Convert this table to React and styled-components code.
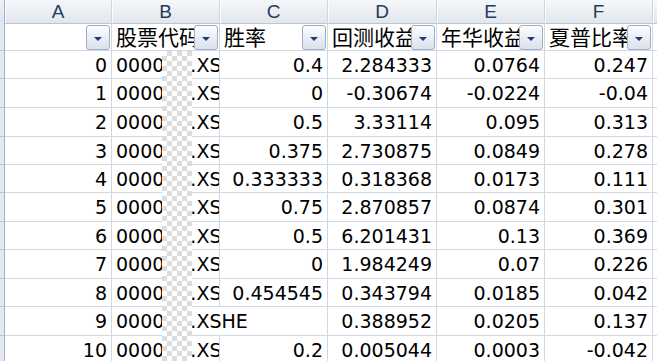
import React from 'react';
import styled, { createGlobalStyle } from 'styled-components';

const Global = createGlobalStyle`
  html, body { margin: 0; padding: 0; background: #fff; overflow: hidden; }
  #root { width: 657px; height: 361px; overflow: hidden; }
`;

const COLS = '5px 107px 108px 108px 109px 108px 108px 40px';

const Sheet = styled.div`
  position: relative;
  width: 657px;
  height: 361px;
  overflow: hidden;
  background: #fff;
  display: flex;
  flex-direction: column;
`;

const Row = styled.div`
  display: grid;
  grid-template-columns: ${COLS};
  height: ${(p) => p.$h}px;
  flex: none;
`;

const Corner = styled.div`
  box-sizing: border-box;
  background: linear-gradient(#eef2f7, #dbe3ee);
  border-right: 1px solid #9fb2cb;
  border-bottom: 1px solid #b9c6d8;
`;

const RowHead = styled.div`
  box-sizing: border-box;
  background: #e2e9f2;
  border-right: 1px solid #9fb2cb;
  border-bottom: 1px solid #b7c4d6;
`;

const ColHead = styled.div`
  box-sizing: border-box;
  background: linear-gradient(#f5f7fa, #e1e6ed);
  border-right: 1px solid #d0d6df;
  border-bottom: 1px solid #bcc7d5;
  box-shadow: inset 1px 0 0 #fbfcfd;
  display: flex;
  align-items: center;
  justify-content: center;
  font-family: "Liberation Sans", Arial, sans-serif;
  font-size: 19px;
  color: #253b5c;
  padding-top: 1px;
`;

const FilterCell = styled.div`
  box-sizing: border-box;
  border-right: 1px solid #d0d7e5;
  border-bottom: 1px solid #d0d7e5;
  display: flex;
  align-items: center;
  padding: 0 1px 0 4px;
  min-width: 0;
`;

const FilterLabel = styled.span`
  flex: 1;
  min-width: 0;
  overflow: hidden;
  white-space: nowrap;
  font-family: "Noto Sans CJK SC", "Noto Sans", sans-serif;
  font-size: 21px;
  line-height: 28px;
  color: #000;
`;

const DropButton = styled.div`
  flex: none;
  align-self: flex-end;
  box-sizing: border-box;
  width: 24px;
  height: 25px;
  border: 1px solid #9eaec4;
  border-radius: 3px;
  background: linear-gradient(#fdfdfe, #e9edf3 55%, #dbe2eb);
  display: flex;
  align-items: center;
  justify-content: center;
  padding-top: 2px;
`;

const Arrow = styled.span`
  width: 0;
  height: 0;
  border-left: 4px solid transparent;
  border-right: 4px solid transparent;
  border-top: 4px solid #1f3b73;
`;

const Cell = styled.div`
  box-sizing: border-box;
  border-right: ${(p) => (p.$open ? '1px solid transparent' : '1px solid #d0d7e5')};
  border-bottom: 1px solid #d0d7e5;
  display: flex;
  align-items: center;
  justify-content: ${(p) => (p.$left ? 'flex-start' : 'flex-end')};
  padding: ${(p) => (p.$left ? '0 0 0 4px' : '0 4px 0 0')};
  overflow: ${(p) => (p.$open ? 'visible' : 'hidden')};
  white-space: nowrap;
  font-family: "DejaVu Sans", Verdana, sans-serif;
  font-size: 19px;
  color: #000;
  position: relative;
  z-index: ${(p) => (p.$open ? 1 : 0)};
`;

const CodeTail = styled.span`
  margin-left: 26px;
`;

const Redaction = styled.div`
  position: absolute;
  left: 162px;
  top: 51px;
  width: 30px;
  bottom: 0;
  z-index: 2;
  background: repeating-conic-gradient(#dcdcdc 0% 25%, #ffffff 0% 50%) 0 0 / 10px 10px;
`;

const LETTERS = ['A', 'B', 'C', 'D', 'E', 'F', ''];
const HEADS = ['', '股票代码', '胜率', '回测收益', '年华收益', '夏普比率'];

const DATA = [
  ['0.4', '2.284333', '0.0764', '0.247'],
  ['0', '-0.30674', '-0.0224', '-0.04'],
  ['0.5', '3.33114', '0.095', '0.313'],
  ['0.375', '2.730875', '0.0849', '0.278'],
  ['0.333333', '0.318368', '0.0173', '0.111'],
  ['0.75', '2.870857', '0.0874', '0.301'],
  ['0.5', '6.201431', '0.13', '0.369'],
  ['0', '1.984249', '0.07', '0.226'],
  ['0.454545', '0.343794', '0.0185', '0.042'],
  ['', '0.388952', '0.0205', '0.137'],
  ['0.2', '0.005044', '0.0003', '-0.042'],
];

const HEIGHTS = [28, 29, 29, 28, 28, 29, 28, 29, 28, 29, 28];

export default function App() {
  return (
    <>
      <Global />
      <Sheet>
        <Row $h={22}>
          <Corner />
          {LETTERS.map((l, i) => (
            <ColHead key={i}>{l}</ColHead>
          ))}
        </Row>
        <Row $h={29}>
          <RowHead />
          {HEADS.map((h, i) => (
            <FilterCell key={i}>
              <FilterLabel>{h}</FilterLabel>
              <DropButton>
                <Arrow />
              </DropButton>
            </FilterCell>
          ))}
          <Cell />
        </Row>
        {DATA.map((r, i) => {
          const emptyC = r[0] === '';
          return (
            <Row key={i} $h={HEIGHTS[i]}>
              <RowHead />
              <Cell>{i}</Cell>
              <Cell $left $open={emptyC}>
                <span>0000</span>
                <CodeTail>.XSHE</CodeTail>
              </Cell>
              <Cell>{r[0]}</Cell>
              <Cell>{r[1]}</Cell>
              <Cell>{r[2]}</Cell>
              <Cell>{r[3]}</Cell>
              <Cell />
            </Row>
          );
        })}
        <Redaction />
      </Sheet>
    </>
  );
}
